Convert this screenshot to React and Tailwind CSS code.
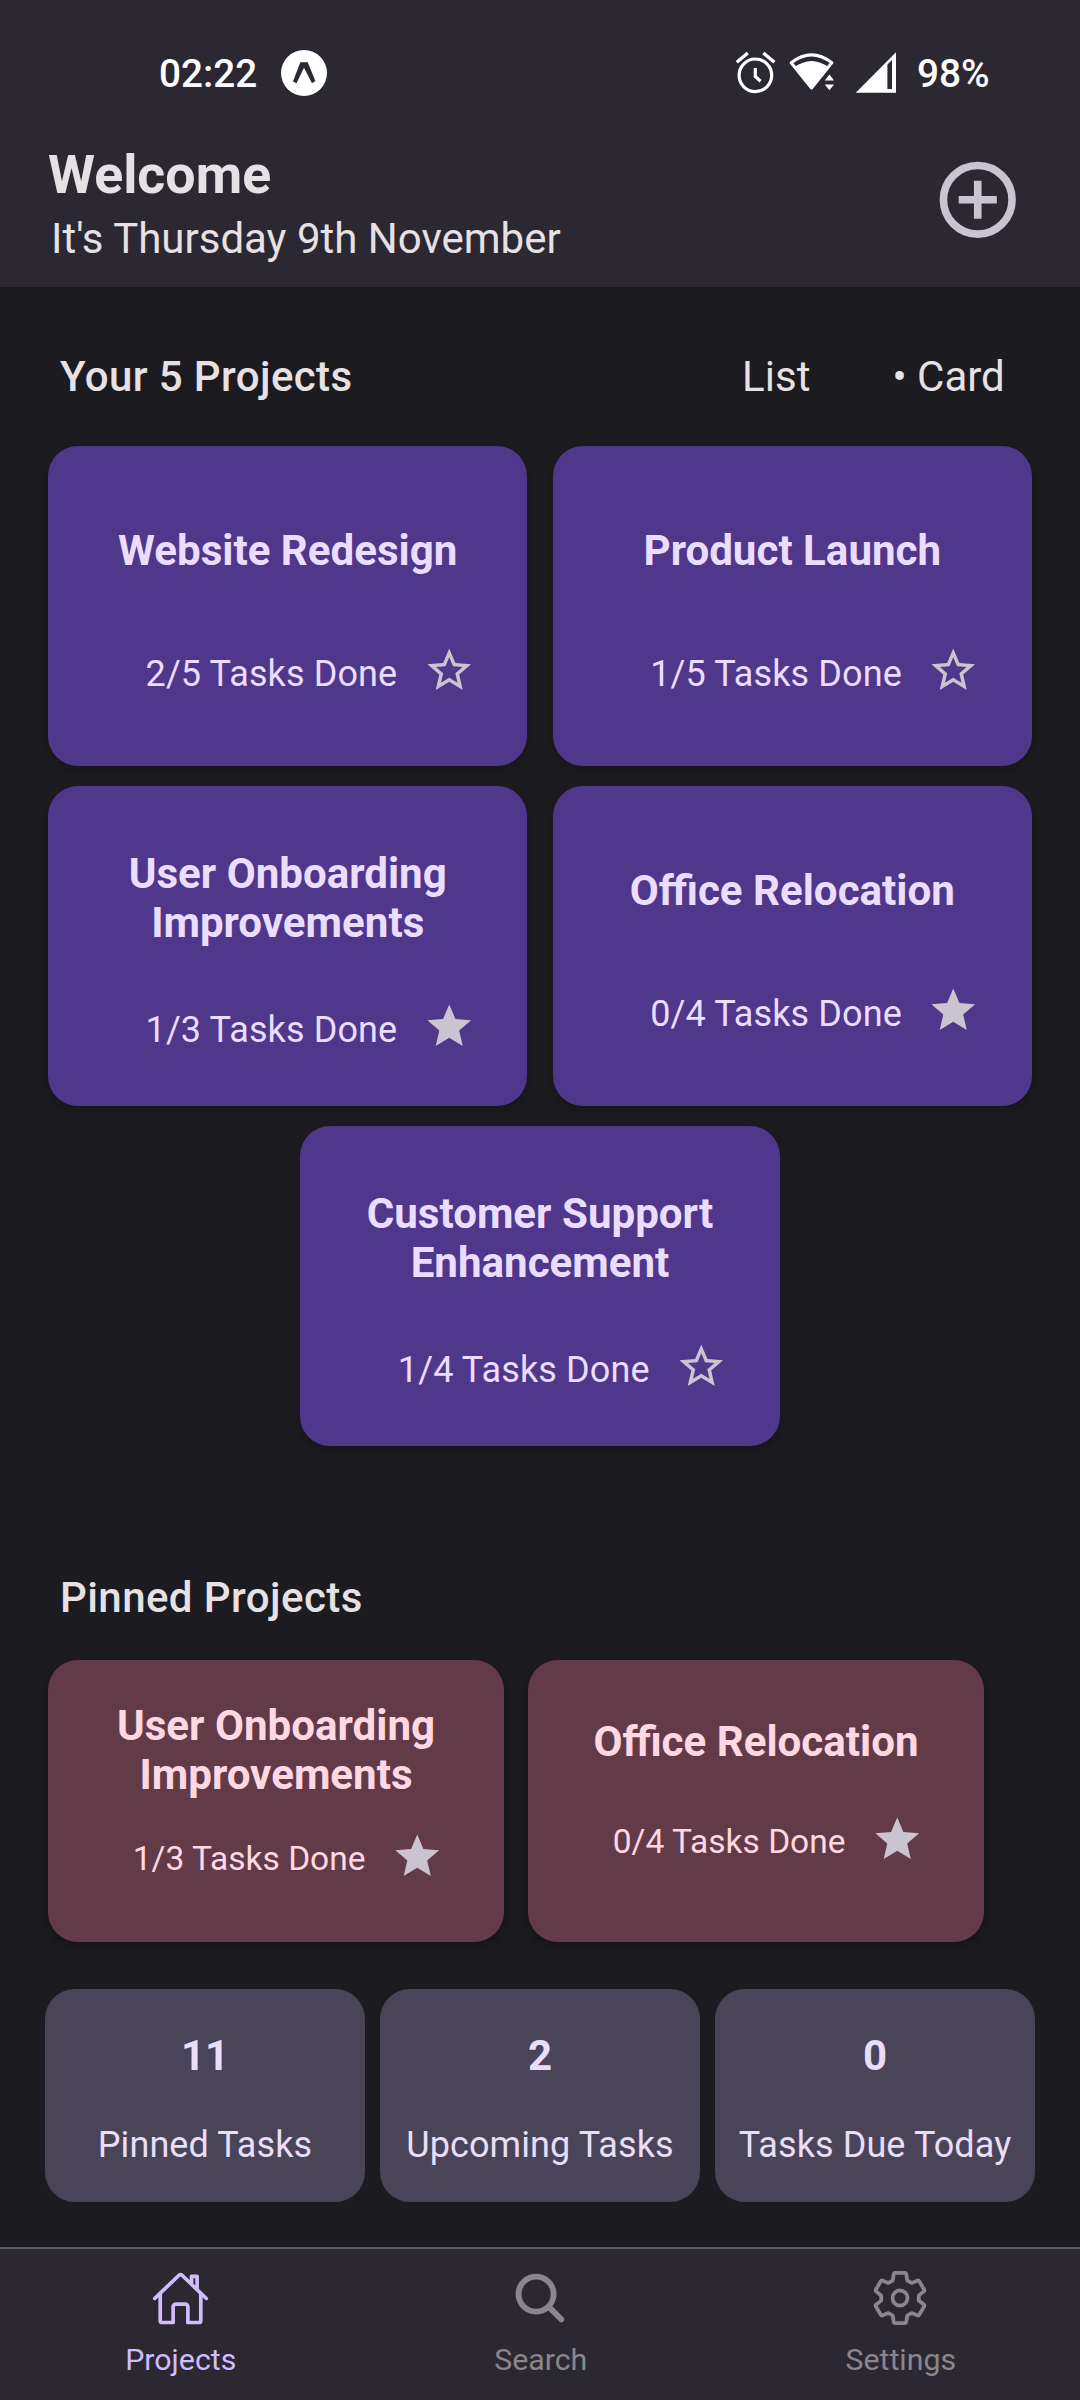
import React from "react";
import { IoHomeOutline, IoSearch, IoSettingsOutline } from "react-icons/io5";

const STAR = "M12 17.27L18.18 21L16.54 13.97L22 9.24L14.81 8.63L12 2L9.19 8.63L2 9.24L7.45 13.97L5.82 21L12 17.27Z";
const STAR_INNER = "M12 15.39L8.24 17.66L9.23 13.38L5.91 10.5L10.29 10.13L12 6.09L13.71 10.13L18.09 10.5L14.77 13.38L15.76 17.66L12 15.39Z";

const projects = [
  { lines: ["Website Redesign"], done: "2/5", pinned: false },
  { lines: ["Product Launch"], done: "1/5", pinned: false },
  { lines: ["User Onboarding", "Improvements"], done: "1/3", pinned: true },
  { lines: ["Office Relocation"], done: "0/4", pinned: true },
  { lines: ["Customer Support", "Enhancement"], done: "1/4", pinned: false },
];

const stats = [
  { value: "11", label: "Pinned Tasks" },
  { value: "2", label: "Upcoming Tasks" },
  { value: "0", label: "Tasks Due Today" },
];

function Star({ filled }) {
  return (
    <svg viewBox="0 0 24 24" className="size-[52.5px] shrink-0 text-[#cac4d0]" fill="currentColor" fillRule="evenodd">
      <path d={filled ? STAR : STAR + STAR_INNER} />
    </svg>
  );
}

function Title({ lines }) {
  return (
    <h3 className="text-center text-[42.1px] leading-[49px] font-bold">
      {lines.map((line) => (
        <span key={line} className="block whitespace-nowrap">{line}</span>
      ))}
    </h3>
  );
}

function ProjectCard({ project }) {
  const wrapped = project.lines.length > 1;
  return (
    <article
      className={`h-[320px] w-[479.4px] rounded-[30px] bg-[#4f378b] text-[#eaddff] shadow-[0_3px_8px_rgba(0,0,0,0.25)] ${wrapped ? "pt-[63px]" : "pt-[80px]"}`}
    >
      <Title lines={project.lines} />
      <div className={`flex items-start justify-end gap-[25.2px] pr-[52.4px] ${wrapped ? "mt-[53px]" : "mt-[69px]"}`}>
        <span className={`text-[36px] leading-[42px] tracking-[0.12px] whitespace-nowrap ${wrapped ? "pt-[9px]" : "pt-[9px]"}`}>
          {project.done} Tasks Done
        </span>
        <Star filled={project.pinned} />
      </div>
    </article>
  );
}

function PinnedCard({ project }) {
  const wrapped = project.lines.length > 1;
  return (
    <article
      className={`h-[282px] w-[456px] rounded-[30px] bg-[#633b48] text-[#ffd8e4] shadow-[0_4px_10px_rgba(0,0,0,0.3)] ${wrapped ? "pt-[41px]" : "pt-[57px]"}`}
    >
      <Title lines={project.lines} />
      <div className={`flex items-start justify-end gap-[25px] pr-[61px] ${wrapped ? "mt-[31px]" : "mt-[47px]"}`}>
        <span className="pt-[9px] text-[33.5px] leading-[40px] whitespace-nowrap">{project.done} Tasks Done</span>
        <Star filled />
      </div>
    </article>
  );
}

function StatusBar() {
  return (
    <div className="flex h-[142px] items-center pt-[4px] pr-[90px] pl-[159px] text-white">
      <span className="w-[122px] pt-[2px] text-[38.7px] leading-[46px] font-medium">02:22</span>
      <svg viewBox="281 50 46 46" className="size-[46px]">
        <circle cx="304" cy="73" r="23" fill="#fff" />
        <path d="M293 81.5L300.3 62.3H307.7L315.4 81L312 83.3L304 67.8L296.5 83.3Z" fill="#2c2831" />
      </svg>
      <svg viewBox="734 49 164 48" className="ml-auto h-[48px] w-[164px]" fill="none" stroke="#fff">
        <circle cx="755.4" cy="75.3" r="16.3" strokeWidth="3.2" />
        <path d="M755.3 68V76.5L760.6 81.2" strokeWidth="3.2" />
        <path d="M736.8 62.3L747.8 53M763.4 53L774.4 62.3" strokeWidth="3.4" />
        <path d="M791.2 62.8Q811.5 47 831.8 62.8L811.5 88Z" strokeWidth="3" strokeLinejoin="round" />
        <path d="M794 67.5Q811.5 54.5 829 67.5L811.5 89Z" fill="#fff" stroke="none" />
        <path d="M829.4 74.4L834 80.4H824.8ZM824.8 84.6H834L829.4 90.2Z" fill="#fff" stroke="none" />
        <path d="M855.7 92.8L896 52.2V92.8ZM887.4 64.5V89H892V60Z" fill="#fff" fillRule="evenodd" stroke="none" />
      </svg>
      <span className="ml-[19px] w-[73px] pt-[2px] text-[38.8px] leading-[46px] font-medium">98%</span>
    </div>
  );
}

function Tab({ icon: Icon, label, active }) {
  return (
    <div className={`flex flex-1 flex-col items-center pt-[19px] ${active ? "text-[#d0bcff]" : "text-[#8a878c]"}`}>
      <Icon className={active ? "m-[0.5px] size-[59px]" : "size-[60px]"} />
      <span className="mt-[14px] pl-[1.5px] text-[30.3px] leading-[36px]">{label}</span>
    </div>
  );
}

export default function App() {
  return (
    <div className="flex h-[2400px] w-[1080px] flex-col overflow-hidden bg-[#1c1b1f] font-['Roboto',sans-serif] text-[#e6e1e5]">
      <header className="h-[287px] bg-[#2c2831]">
        <StatusBar />
        <div className="flex justify-between pr-[56.5px] pl-[48px]">
          <div>
            <h1 className="text-[53.7px] leading-[65px] font-bold">Welcome</h1>
            <p className="mt-[7px] pl-[3px] text-[42px] leading-[49px]">It's Thursday 9th November</p>
          </div>
          <svg viewBox="0 0 24 24" className="mt-[12px] size-[91.5px] text-[#cac4d0]" fill="none" stroke="currentColor" strokeWidth="2">
            <circle cx="12" cy="12" r="9" />
            <path d="M12 7V17M7 12H17" />
          </svg>
        </div>
      </header>

      <main className="flex-1 pt-[65px]">
        <div className="flex pl-[60px] text-[42px] leading-[49px]">
          <h2 className="w-[682px] font-medium tracking-[0.39px]">Your 5 Projects</h2>
          <span className="w-[150.5px] tracking-[0.1px]">List</span>
          <span>• Card</span>
        </div>
        <section className="mt-[45px] flex flex-wrap justify-center gap-x-[25.2px] gap-y-[20px] px-[48px]">
          {projects.map((p) => (
            <ProjectCard key={p.lines[0]} project={p} />
          ))}
        </section>

        <h2 className="mt-[127px] pl-[60px] text-[42px] leading-[49px] font-medium tracking-[0.42px]">Pinned Projects</h2>
        <section className="mt-[38px] flex gap-[24px] pl-[48px]">
          {projects.filter((p) => p.pinned).map((p) => (
            <PinnedCard key={p.lines[0]} project={p} />
          ))}
        </section>

        <section className="mt-[47px] flex gap-[15px] pl-[45px]">
          {stats.map((s) => (
            <div key={s.label} className="h-[213px] w-[320px] rounded-[30px] bg-[#4a4458] pt-[42px] text-center text-[#e8def8]">
              <div className="text-[42px] leading-[49px] font-bold">{s.value}</div>
              <div className="mt-[44px] text-[36px] leading-[42px] tracking-[0.1px] whitespace-nowrap">{s.label}</div>
            </div>
          ))}
        </section>
      </main>

      <nav className="flex h-[153px] border-t-2 border-[#5d5b61] bg-[#2c2831]">
        <Tab icon={IoHomeOutline} label="Projects" active />
        <Tab icon={IoSearch} label="Search" />
        <Tab icon={IoSettingsOutline} label="Settings" />
      </nav>
    </div>
  );
}
